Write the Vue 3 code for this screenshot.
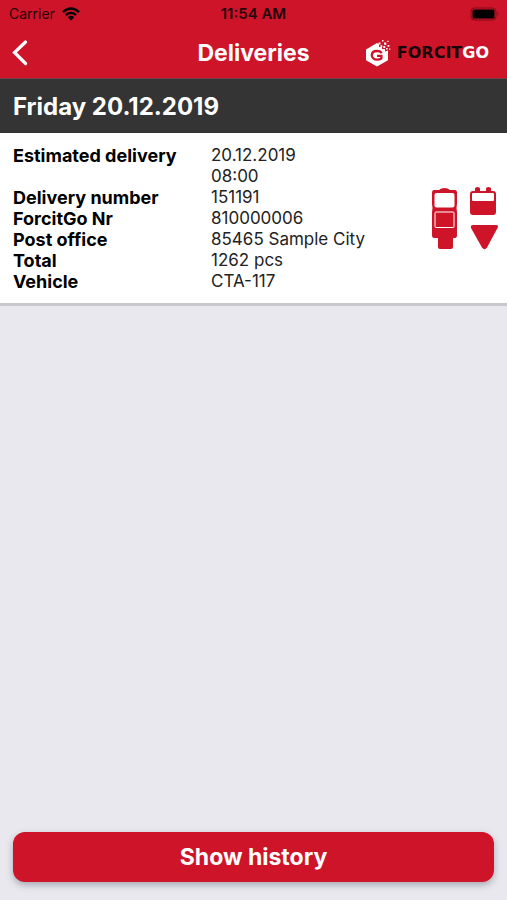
<script setup>
const details = [
  { label: 'Estimated delivery', lines: ['20.12.2019', '08:00'] },
  { label: 'Delivery number', lines: ['151191'] },
  { label: 'ForcitGo Nr', lines: ['810000006'] },
  { label: 'Post office', lines: ['85465 Sample City'] },
  { label: 'Total', lines: ['1262 pcs'] },
  { label: 'Vehicle', lines: ['CTA-117'] },
]
</script>

<template>
  <div class="screen">
    <header class="top">
      <div class="status">
        <div class="carrier">
          <span>Carrier</span>
          <svg class="wifi" viewBox="0 0 18 14" aria-hidden="true">
            <path d="M1 5.2Q9-2.2 17 5.2M3.9 8.2Q9 3.5 14.1 8.2" fill="none" stroke="currentColor" stroke-width="2.4" />
            <path d="M5.8 10.3Q9 7.4 12.2 10.3L9 13.6Z" fill="currentColor" />
          </svg>
        </div>
        <span class="time">11:54 AM</span>
        <svg class="battery" viewBox="0 0 30 14" aria-hidden="true">
          <rect x="1" y="1" width="25" height="12" rx="3.5" fill="none" stroke="#7d0b1b" />
          <rect x="2.5" y="2.5" width="22" height="9" rx="1.5" fill="#000" />
          <path d="M27.5 4.8Q29.3 7 27.5 9.2Z" fill="#7d0b1b" />
        </svg>
      </div>
      <nav class="bar">
        <button class="back" type="button" aria-label="Back">
          <svg viewBox="0 0 16 26" aria-hidden="true">
            <path d="M13.5 2L2.5 12.5L13.5 23.5" fill="none" stroke="#fff" stroke-width="3.2" stroke-linecap="round" />
          </svg>
        </button>
        <h1>Deliveries</h1>
        <div class="brand">
          <svg viewBox="0 0 26 28" aria-hidden="true">
            <path d="M12 4L14 5.2V8H17V10H20V12.5L23 11.5V21.2L12 27.6L1 21.2V10.4Z" fill="#fff" />
            <path d="M16.8 13.9C15.8 12.7 14.2 12 12.2 12C8.8 12 6.8 13.9 6.8 16.3S8.9 20.6 12.2 20.6C14 20.6 15.7 20.1 16.4 19.4V16.8H12" fill="none" stroke="#ce1429" stroke-width="2.3" />
            <path d="M13.5 3.5h2v2h-2zM17 1h1.5v1.5H17zM19 3.5h2.3v2.3H19zM15.5 6.3h1.8v1.8h-1.8zM18.3 7h2v2h-2zM22.3 1.8h1.3v1.3h-1.3zM22.6 6h1.8v1.8h-1.8zM21 9h1.6v1.6H21zM24 9.5h1.3v1.3H24z" fill="#fff" />
          </svg>
          <span class="wordmark">FORCIT<b>GO</b></span>
        </div>
      </nav>
    </header>

    <main>
      <h2>Friday 20.12.2019</h2>
      <section class="card">
        <dl>
          <template v-for="item in details" :key="item.label">
            <dt>{{ item.label }}</dt>
            <dd><div v-for="line in item.lines" :key="line">{{ line }}</div></dd>
          </template>
        </dl>
        <svg class="vehicle" viewBox="0 0 68 64" aria-hidden="true">
          <g fill="#ce1429">
            <path d="M4 3H9Q11 1 14.5 1T20 3H25Q27 3 27 6V17L26.5 21L27 25V48Q27 51 25 51H23V60Q23 62 21 62H10Q8 62 8 60V51H4Q2 51 2 48V25L2.5 21L2 17V6Q2 3 4 3Z" />
            <path d="M43 4H45V1.5Q45 0 47.5 0T50 1.5V4H56V1.5Q56 0 58.5 0T61 1.5V4H63Q66 4 66 7V25Q66 28 63 28H43Q40 28 40 25V7Q40 4 43 4Z" />
            <path d="M43 38H66Q69 38 67.5 41L57 60.5Q54.5 64 52 60.5L41 41Q40 38 43 38Z" />
          </g>
          <rect x="4.5" y="6" width="20" height="14.5" rx="2" fill="#fff" />
          <rect x="5" y="25" width="19" height="15.5" rx="1" fill="none" stroke="#fff" />
          <rect x="42" y="6" width="22" height="8" rx="1" fill="#fff" />
        </svg>
      </section>
    </main>

    <footer>
      <button class="history" type="button">Show history</button>
    </footer>
  </div>
</template>

<style>
body {
  background: #e8e8ee;
}
</style>

<style scoped>
.screen {
  display: flex;
  flex-direction: column;
  min-height: 100vh;
  background: #e8e8ee;
  color: #000;
  font-family: Inter, "Liberation Sans", sans-serif;
}

h1, h2, dl, dd {
  margin: 0;
}

button {
  border: 0;
  font: inherit;
  cursor: pointer;
}

.top {
  background: #ce1429;
  border-bottom: 1px solid #75404a;
}

.status {
  display: grid;
  grid-template-columns: 1fr auto 1fr;
  align-items: center;
  height: 27px;
  padding: 0 7px;
  font-size: 14px;
  color: #25040a;
}

.carrier {
  display: flex;
  align-items: center;
  gap: 7px;
  padding-left: 2px;
}

.wifi {
  width: 18px;
  height: 14px;
  color: #000;
}

.time {
  font-size: 15px;
  font-weight: 600;
}

.battery {
  justify-self: end;
  width: 30px;
  height: 14px;
}

.bar {
  display: grid;
  grid-template-columns: 1fr auto 1fr;
  align-items: center;
  height: 51px;
  padding: 0 12px;
}

.back {
  justify-self: start;
  display: flex;
  padding: 0;
  background: none;
}

.back svg {
  width: 16px;
  height: 26px;
}

h1 {
  font-size: 23px;
  line-height: 28px;
  font-weight: 700;
  color: #fff;
}

.brand {
  justify-self: end;
  display: flex;
  align-items: center;
  gap: 6px;
  padding-right: 6px;
}

.brand svg {
  width: 26px;
  height: 28px;
}

.wordmark {
  font: bold 16px/18px "DejaVu Sans", sans-serif;
  color: #16040a;
}

.wordmark b {
  color: #fff;
}

main {
  flex: 1;
}

h2 {
  padding: 14px 13px 12px;
  background: #343434;
  color: #fff;
  font-size: 24px;
  line-height: 28px;
  font-weight: 700;
}

.card {
  display: flex;
  align-items: center;
  justify-content: space-between;
  padding: 12px 9px 11px 13px;
  border-bottom: 3px solid #c8c8cc;
  background: #fff;
}

dl {
  display: grid;
  grid-template-columns: 198px auto;
  font-size: 17px;
  line-height: 21px;
}

dt {
  font-size: 18px;
  font-weight: 700;
}

dd {
  color: #222;
}

.vehicle {
  width: 68px;
  height: 64px;
}

footer {
  padding: 13px 13px 18px;
}

.history {
  width: 100%;
  height: 50px;
  border-radius: 12px;
  background: #ce1429;
  box-shadow: 0 3px 7px #a8a8b4;
  color: #fff;
  font-size: 23px;
  font-weight: 700;
}
</style>
